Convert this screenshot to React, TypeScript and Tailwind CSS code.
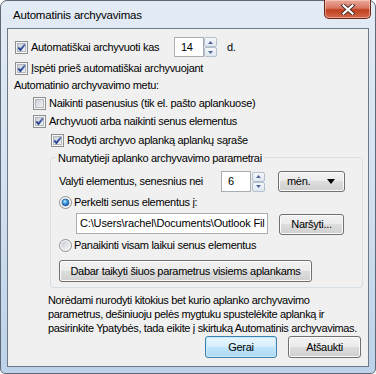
import React from 'react';

const ui = { fontFamily: '"Liberation Sans", Arial, sans-serif' };

function CheckBox({ checked }: { checked: boolean }) {
  return (
    <svg width="13" height="13" viewBox="0 0 13 13" className="shrink-0">
      <defs>
        <linearGradient id="cbfill" x1="0" y1="0" x2="1" y2="1">
          <stop offset="0" stopColor="#c9ced5" />
          <stop offset="1" stopColor="#f4f4f5" />
        </linearGradient>
        <linearGradient id="cbmark" x1="0" y1="0" x2="0" y2="1">
          <stop offset="0" stopColor="#5d74b4" />
          <stop offset="1" stopColor="#23418f" />
        </linearGradient>
      </defs>
      <rect x="0.5" y="0.5" width="12" height="12" fill="#f4f4f4" stroke="#8e8f8f" />
      <rect x="2.5" y="2.5" width="8" height="8" fill="url(#cbfill)" stroke="#b4b9bf" />
      {checked && (
        <path d="M3.2 6.4 L5.4 8.9 L9.9 3.3" fill="none" stroke="url(#cbmark)" strokeWidth="1.9" />
      )}
    </svg>
  );
}

function Radio({ checked }: { checked: boolean }) {
  return (
    <svg width="13" height="13" viewBox="0 0 13 13" className="shrink-0">
      <defs>
        <linearGradient id="rbfill" x1="0" y1="0" x2="1" y2="1">
          <stop offset="0" stopColor="#c5cad1" />
          <stop offset="1" stopColor="#f7f7f7" />
        </linearGradient>
        <radialGradient id="rbdot" cx="0.4" cy="0.35" r="0.7">
          <stop offset="0" stopColor="#b9ecff" />
          <stop offset="0.5" stopColor="#3d96dd" />
          <stop offset="1" stopColor="#0d4b98" />
        </radialGradient>
      </defs>
      <circle cx="6.5" cy="6.5" r="6" fill="#f4f4f4" stroke="#8e8f8f" />
      <circle cx="6.5" cy="6.5" r="4.3" fill="url(#rbfill)" />
      {checked && <circle cx="6.5" cy="6.5" r="3.4" fill="url(#rbdot)" stroke="#1b4f8c" strokeWidth="0.6" />}
    </svg>
  );
}

function Spinner() {
  const half =
    'flex-1 flex items-center justify-center border border-[#b3c0cf] rounded-[2px] bg-[linear-gradient(#f5f8fb,#dfe7f0)]';
  return (
    <div className="flex flex-col w-[13px] h-[20px] shrink-0">
      <div className={half}>
        <svg width="5" height="3" viewBox="0 0 5 3">
          <path d="M0 3 L2.5 0 L5 3 Z" fill="#4f669c" />
        </svg>
      </div>
      <div className={half}>
        <svg width="5" height="3" viewBox="0 0 5 3">
          <path d="M0 0 L2.5 3 L5 0 Z" fill="#4f669c" />
        </svg>
      </div>
    </div>
  );
}

// Windows 7 style push button
const btnFace =
  'border border-[#707070] rounded-[3px] bg-[linear-gradient(#f2f2f2,#ebebeb_50%,#dddddd_50%,#cfcfcf)] shadow-[inset_0_0_0_1px_#fbfbfb] text-black whitespace-nowrap';
const btn = `${btnFace} flex items-center justify-center shrink-0 overflow-hidden`;

export default function App() {
  return (
    <div className="w-[376px] h-[374px] bg-white text-[11px]" style={ui}>
      <div className="relative w-[376px] h-[374px] flex flex-col rounded-t-[7px] rounded-b-[5px] border border-[#5f6976] px-[6px] pb-[6px] bg-[linear-gradient(180deg,#e3ebf5_0%,#d5e2f0_45%,#bdd2e9_100%)]">
        {/* title bar */}
        <div className="h-[27px] shrink-0 pl-[6px] pt-[6px] text-[11.5px] leading-[16px] tracking-[-0.2px] text-black">
          Automatinis archyvavimas
        </div>
        <div className="absolute top-[-1px] right-[4px] w-[47px] h-[19px] flex items-center justify-center rounded-b-[5px] border border-t-0 border-[#6b2516] bg-[linear-gradient(#e9a999,#d97662_45%,#c1401f_55%,#d2694c)] shadow-[inset_0_0_0_1px_rgba(255,220,210,0.5)]">
          <svg width="14" height="11" viewBox="0 0 14 11">
            <path d="M2.5 1.5 L11.5 9.5 M11.5 1.5 L2.5 9.5" stroke="#4a2b25" strokeWidth="4" strokeLinecap="square" />
            <path d="M2.5 1.5 L11.5 9.5 M11.5 1.5 L2.5 9.5" stroke="#ffffff" strokeWidth="2.2" strokeLinecap="square" />
          </svg>
        </div>

        {/* client area */}
        <div className="h-[339px] shrink-0 flex flex-col items-start border border-[#6c7989] bg-[#f0f0f0] text-black whitespace-nowrap tracking-[-0.3px]">
          {/* row 1 */}
          <div className="mt-[8px] h-[20px] flex items-center pl-[7px]">
            <CheckBox checked />
            <span className="ml-[3px] w-[143px]">Automatiškai archyvuoti kas</span>
            <div className="w-[30px] h-[20px] flex items-center pl-[6px] border border-[#abadb3] bg-white">14</div>
            <Spinner />
            <span className="ml-[10px]">d.</span>
          </div>
          <div className="mt-[3px] h-[17px] flex items-center pl-[7px]">
            <CheckBox checked />
            <span className="ml-[3px]">Įspėti prieš automatiškai archyvuojant</span>
          </div>
          <div className="h-[17px] flex items-center pl-[6px]">Automatinio archyvavimo metu:</div>
          <div className="mt-[1px] h-[17px] flex items-center pl-[25px]">
            <CheckBox checked={false} />
            <span className="ml-[3px]">Naikinti pasenusius (tik el. pašto aplankuose)</span>
          </div>
          <div className="mt-[1px] h-[17px] flex items-center pl-[25px]">
            <CheckBox checked />
            <span className="ml-[3px]">Archyvuoti arba naikinti senus elementus</span>
          </div>
          <div className="mt-[2px] h-[17px] flex items-center pl-[43px]">
            <CheckBox checked />
            <span className="ml-[3px]">Rodyti archyvo aplanką aplankų sąraše</span>
          </div>

          {/* group box */}
          <div className="mt-[8px] ml-[42px] w-[313px] flex flex-col items-start border border-[#d5dfe5] rounded-[3px] pl-[8px] pb-[5px]">
            <div className="mt-[-8px] ml-[-3px] px-[2px] h-[16px] leading-[16px] bg-[#f0f0f0]">
              Numatytieji aplanko archyvavimo parametrai
            </div>
            <div className="mt-[5px] h-[21px] flex items-center">
              <span className="w-[162px]">Valyti elementus, senesnius nei</span>
              <div className="w-[30px] h-[21px] flex items-center pl-[6px] border border-[#abadb3] bg-white">6</div>
              <div className="ml-[1px]">
                <Spinner />
              </div>
              <div className={`${btnFace} ml-[13px] w-[67px] h-[21px] flex items-center justify-between pl-[8px] pr-[9px]`}>
                <span>mėn.</span>
                <svg width="8" height="5" viewBox="0 0 8 5">
                  <path d="M0 0 L8 0 L4 5 Z" fill="#000" />
                </svg>
              </div>
            </div>
            <div className="mt-[2px] h-[17px] flex items-center">
              <Radio checked />
              <span className="ml-[2px]">Perkelti senus elementus į:</span>
            </div>
            <div className="mt-[2px] h-[22px] flex items-start pl-[17px]">
              <div className="w-[192px] h-[21px] flex items-center pl-[3px] border border-[#abadb3] bg-white overflow-hidden tracking-[-0.15px]">
                C:\Users\rachel\Documents\Outlook Fil
              </div>
              <div className={`${btn} ml-[11px] mt-[1px] w-[65px] h-[21px]`}>Naršyti...</div>
            </div>
            <div className="mt-[2px] h-[17px] flex items-center">
              <Radio checked={false} />
              <span className="ml-[2px]">Panaikinti visam laikui senus elementus</span>
            </div>
            <div className="mt-[6px] h-[22px] flex items-start">
              <div className={`${btn} w-[253px] h-[22px]`}>Dabar taikyti šiuos parametrus visiems aplankams</div>
            </div>
          </div>

          {/* help text */}
          <p className="mt-[5px] ml-[40px] leading-[14px] tracking-[-0.35px]">
            Norėdami nurodyti kitokius bet kurio aplanko archyvavimo
            <br />
            parametrus, dešiniuoju pelės mygtuku spustelėkite aplanką ir
            <br />
            pasirinkite Ypatybės, tada eikite į skirtuką Automatinis archyvavimas.
          </p>

          {/* buttons */}
          <div className="mt-[1px] self-stretch flex justify-end pr-[7px]">
            <div className="w-[72px] h-[22px] flex items-center justify-center rounded-[3px] border border-[#3c7fb1] bg-[linear-gradient(#e8f6fd,#d6effc_50%,#bfe5fa_50%,#aedaf3)] shadow-[inset_0_0_0_1px_#c8eaf9]">
              Gerai
            </div>
            <div className={`${btn} ml-[11px] w-[73px] h-[22px]`}>Atšaukti</div>
          </div>
        </div>
      </div>
    </div>
  );
}
